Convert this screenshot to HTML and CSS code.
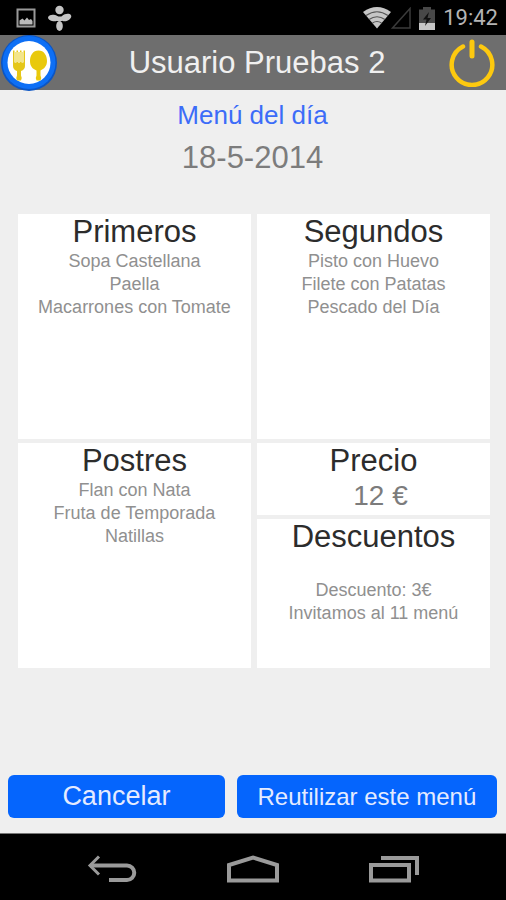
FILE: index.html
```html
<!DOCTYPE html>
<html lang="es">
<head>
<meta charset="utf-8">
<meta name="viewport" content="width=device-width, initial-scale=1">
<title>Menú del día</title>
<link rel="stylesheet" href="styles.css">
</head>
<body>
<div class="status">
  <div class="status-group">
    <svg width="20" height="20" viewBox="0 0 20 20" aria-hidden="true">
      <rect x="1.500" y="1.500" width="17" height="17" fill="none" stroke="#999" stroke-width="2"/>
      <path d="M3.500 16.500v-4l3-2 2 2 2.500-3 2 2.500 2-1 1.500 2v3.500z" fill="#bbb"/>
    </svg>
    <svg width="24" height="26" viewBox="0 0 24 26" fill="#c4c4c4" aria-hidden="true">
      <circle cx="11.500" cy="5" r="4.200"/>
      <ellipse cx="5.500" cy="13" rx="5.500" ry="3.300" transform="rotate(8 5.500 13)"/>
      <ellipse cx="18" cy="12.500" rx="5.500" ry="3.500" transform="rotate(-22 18 12.500)"/>
      <ellipse cx="11.500" cy="21" rx="3.300" ry="5"/>
      <path d="M8.500 11.500h6v4.500h-6z"/>
    </svg>
  </div>
  <div class="status-group status-right">
    <svg width="28" height="22" viewBox="0 0 28 22" aria-hidden="true">
      <path d="M14 21.500 0 5Q14-5 28 5z" fill="#c6c6c6"/>
      <path d="M3 8.500Q14 1 25 8.500M6 12.500q8-5.500 16 0M9.500 16q4.500-3 9 0" fill="none" stroke="#555" stroke-width="1.200"/>
    </svg>
    <svg width="21" height="22" viewBox="0 0 21 22" aria-hidden="true">
      <path d="M1.500 21 19 1.500V21z" fill="none" stroke="#3b3b3b" stroke-width="1.500"/>
    </svg>
    <svg class="battery" width="16" height="23" viewBox="0 0 16 23" aria-hidden="true">
      <path d="M4 0h8v2.500h4V23H0V2.500h4z" fill="#484848"/>
      <path d="M0 16h16v7H0z" fill="#c6c6c6"/>
      <path d="M10 5 4 12.500h3.500L6 19l6-8H8.500z" fill="#111"/>
    </svg>
    <span class="clock">19:42</span>
  </div>
</div>

<header class="header">
  <svg class="logo" width="56" height="56" viewBox="0 0 56 56" aria-hidden="true">
    <circle cx="28" cy="28" r="28" fill="#0b55c4"/>
    <circle cx="28" cy="27.500" r="26.500" fill="#0d6ff5"/>
    <circle cx="28" cy="27.500" r="21.500" fill="#fff"/>
    <path d="M12 15.500h1.500v12h2v-12H17v12h2v-12h1.500v12h2v-12H24V31q0 3.500-4 5v4.500q1.500 2.500 0 5h-4q-1.500-2.500 0-5V36q-4-1.500-4-5z" fill="#e5c718"/>
    <path d="M13.500 17h9v10h-9z" fill="#f3e58a"/>
    <path d="M37.500 15.500c5.500 0 8.500 5 8.500 10.500 0 5-3 8-6.500 9.500v5q1.500 2.500 0 5h-4q-1.500-2.500 0-5v-5c-4-1.500-6.500-4.500-6.500-9.500 0-5.500 3-10.500 8.500-10.500z" fill="#e9c90c"/>
  </svg>
  <h1 class="user">Usuario Pruebas 2</h1>
  <button class="power" type="button" aria-label="Salir">
    <svg width="46" height="48" viewBox="0 0 46 48" fill="none" stroke="#fdc90f" stroke-width="4.500" stroke-linecap="round" aria-hidden="true">
      <path d="M14 7.500a20.300 20.300 0 1 0 18 0"/>
      <path d="M23 3v14" stroke-width="5"/>
    </svg>
  </button>
</header>

<main class="main">
  <h2 class="title">Menú del día</h2>
  <p class="date">18-5-2014</p>

  <div class="menu">
    <section class="card">
      <h3>Primeros</h3>
      <ul>
        <li>Sopa Castellana</li>
        <li>Paella</li>
        <li>Macarrones con Tomate</li>
      </ul>
    </section>
    <section class="card">
      <h3>Segundos</h3>
      <ul>
        <li>Pisto con Huevo</li>
        <li>Filete con Patatas</li>
        <li>Pescado del Día</li>
      </ul>
    </section>
    <section class="card">
      <h3>Postres</h3>
      <ul>
        <li>Flan con Nata</li>
        <li>Fruta de Temporada</li>
        <li>Natillas</li>
      </ul>
    </section>
    <div class="stack">
      <section class="card">
        <h3>Precio</h3>
        <p class="price">12 €</p>
      </section>
      <section class="card">
        <h3>Descuentos</h3>
        <ul class="discounts">
          <li>Descuento: 3€</li>
          <li>Invitamos al 11 menú</li>
        </ul>
      </section>
    </div>
  </div>

  <div class="actions">
    <button class="action cancel" type="button">Cancelar</button>
    <button class="action reuse" type="button">Reutilizar este menú</button>
  </div>
</main>

<nav class="nav" aria-label="Sistema">
  <button type="button" aria-label="Atrás">
    <svg width="50" height="28" viewBox="0 0 50 28" fill="none" stroke="#9a9a9a" aria-hidden="true">
      <path d="M12 1.500 3 10.500l9 9" stroke-width="3"/>
      <path d="M3 10.500h37a7 7 0 0 1 0 14.500H22" stroke-width="4"/>
    </svg>
  </button>
  <button type="button" aria-label="Inicio">
    <svg width="54" height="28" viewBox="0 0 54 28" fill="none" stroke="#9a9a9a" stroke-width="4" aria-hidden="true">
      <path d="M3 25.500V10L27 2.500 51 10v15.500z"/>
    </svg>
  </button>
  <button type="button" aria-label="Recientes">
    <svg width="52" height="28" viewBox="0 0 52 28" fill="none" stroke="#9a9a9a" stroke-width="4" aria-hidden="true">
      <path d="M3 10h38v15.500H3z"/>
      <path d="M13 3h36v17"/>
    </svg>
  </button>
</nav>
</body>
</html>
```

FILE: styles.css
```css
* {
  box-sizing: border-box;
}

body {
  margin: 0;
  min-height: 100vh;
  display: flex;
  flex-direction: column;
  background: #efefef;
  font-family: "Liberation Sans", Arial, sans-serif;
}

h1, h2, h3, p, ul {
  margin: 0;
  padding: 0;
  font-weight: 400;
}

ul {
  list-style: none;
}

button {
  margin: 0;
  padding: 0;
  border: 0;
  background: none;
  font: inherit;
}

svg {
  display: block;
}

/* System status bar */
.status {
  display: flex;
  justify-content: space-between;
  align-items: center;
  height: 35px;
  padding: 1px 8px 0 16px;
  background: #000;
}

.status-group {
  display: flex;
  align-items: center;
  gap: 12px;
}

.status-right {
  gap: 0;
}

.battery {
  margin: 0 8px 0 7px;
}

.clock {
  font: 400 22px/24px Roboto, sans-serif;
  color: #b4b4b4;
}

/* App header */
.header {
  display: grid;
  grid-template-columns: 56px 1fr 46px;
  align-items: center;
  height: 55px;
  padding: 0 11px 0 1px;
  background: #6e6e6e;
}

.user {
  padding-left: 8px;
  font-size: 31px;
  line-height: 36px;
  text-align: center;
  color: #f0f0f0;
}

/* Content */
.main {
  flex: 1;
  display: flex;
  flex-direction: column;
  padding: 10px 9px 15px 8px;
  border-bottom: 1px solid #777;
  text-align: center;
}

.title {
  font-size: 26px;
  line-height: 30px;
  color: #3c6cf8;
}

.date {
  margin-top: 10px;
  font-size: 31px;
  line-height: 36px;
  color: #7c7c7c;
}

.menu {
  display: grid;
  grid-template-columns: 1fr 1fr;
  grid-auto-rows: minmax(225px, auto);
  gap: 4px 6px;
  margin: 38px 7px 24px 10px;
}

.card {
  background: #fff;
  color: #909090;
  font-size: 18px;
  line-height: 23px;
}

.card h3 {
  font-size: 31px;
  line-height: 36px;
  color: #2c2c2c;
}

.stack {
  display: grid;
  grid-template-rows: 72px 1fr;
  gap: 4px;
}

.price {
  padding-left: 14px;
  font-size: 28px;
  line-height: 34px;
  color: #7c7c7c;
}

.discounts {
  padding-top: 24px;
}

.actions {
  display: flex;
  gap: 12px;
  margin-top: auto;
}

.action {
  height: 43px;
  border-radius: 6px;
  background: #0565fd;
  color: #e4ebff;
}

.cancel {
  flex: 5;
  font-size: 27px;
}

.reuse {
  flex: 6;
  font-size: 24px;
}

/* System navigation */
.nav {
  display: grid;
  grid-template-columns: repeat(3, 1fr);
  height: 66px;
  padding: 4px 41px 0;
  background: #000;
}

.nav button {
  display: grid;
  place-items: center;
}
```
